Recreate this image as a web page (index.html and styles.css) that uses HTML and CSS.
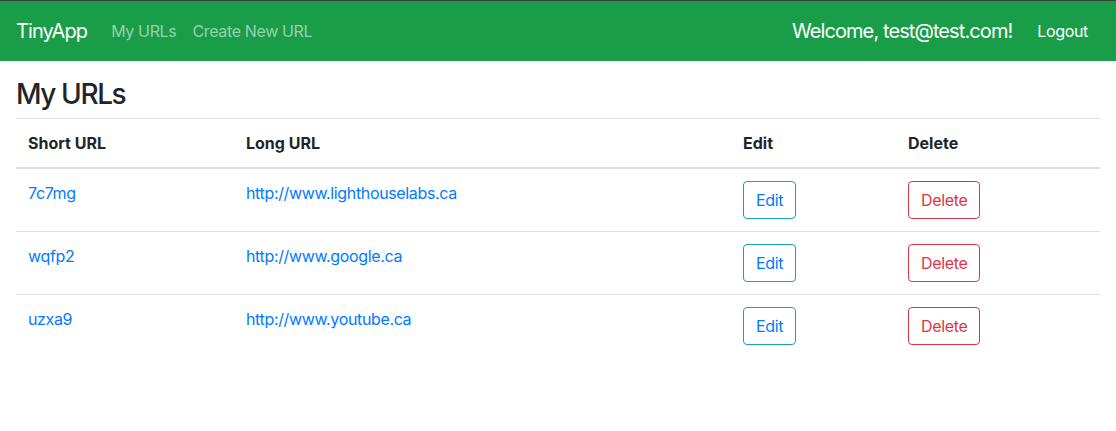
FILE: index.html
```html
<!DOCTYPE html>
<html lang="en">
<head>
<meta charset="utf-8">
<title>TinyApp</title>
<link rel="stylesheet" href="styles.css">
</head>
<body>
<nav class="navbar">
  <div class="nav-left">
    <a class="brand" href="#">TinyApp</a>
    <a class="nav-link" href="#">My URLs</a>
    <a class="nav-link" href="#">Create New URL</a>
  </div>
  <div class="nav-right">
    <span class="welcome">Welcome, test@test.com!</span>
    <a class="logout" href="#">Logout</a>
  </div>
</nav>
<main class="container">
  <h3 class="title">My URLs</h3>
  <table class="table">
    <colgroup>
      <col class="c1"><col class="c2"><col class="c3"><col class="c4">
    </colgroup>
    <thead>
      <tr><th>Short URL</th><th>Long URL</th><th>Edit</th><th>Delete</th></tr>
    </thead>
    <tbody>
      <tr>
        <td><a href="#">7c7mg</a></td>
        <td><a href="#">http://www.lighthouselabs.ca</a></td>
        <td><a class="btn btn-edit" href="#">Edit</a></td>
        <td><button class="btn btn-delete">Delete</button></td>
      </tr>
      <tr>
        <td><a href="#">wqfp2</a></td>
        <td><a href="#">http://www.google.ca</a></td>
        <td><a class="btn btn-edit" href="#">Edit</a></td>
        <td><button class="btn btn-delete">Delete</button></td>
      </tr>
      <tr>
        <td><a href="#">uzxa9</a></td>
        <td><a href="#">http://www.youtube.ca</a></td>
        <td><a class="btn btn-edit" href="#">Edit</a></td>
        <td><button class="btn btn-delete">Delete</button></td>
      </tr>
    </tbody>
  </table>
</main>
</body>
</html>
```
FILE: styles.css
```css
* { box-sizing: border-box; }
html, body {
  margin: 0;
  font-family: Inter, "Liberation Sans", Arial, sans-serif;
  font-size: 16px;
  line-height: 1.5;
  letter-spacing: -0.022em;
  color: #212529;
  background: #fff;
}
a { text-decoration: none; color: #007bff; }

.navbar {
  display: flex;
  align-items: center;
  justify-content: space-between;
  height: 61px;
  border-top: 1px solid #3d3d3d;
  background: #199d48;
  padding: 0 20px 0 16px;
}
.nav-left, .nav-right { display: flex; align-items: center; }
.brand {
  color: #fff;
  font-size: 20px;
  line-height: 30px;
  letter-spacing: -0.045em;
  margin-right: 16px;
}
.nav-link {
  color: rgba(255,255,255,0.55);
  padding: 8px;
  line-height: 24px;
}
.welcome {
  color: #fff;
  font-size: 20px;
  line-height: 30px;
  letter-spacing: -0.045em;
  margin-right: 17px;
}
.logout {
  color: #fff;
  padding: 8px;
  line-height: 24px;
}

.container { padding: 0 16px; }
.title {
  margin: 17px 0 6px;
  font-size: 28px;
  font-weight: 500;
  line-height: 1.2;
  letter-spacing: -0.05em;
}
.table {
  width: 100%;
  border-collapse: collapse;
  table-layout: fixed;
}
.c1 { width: 218px; }
.c2 { width: 497px; }
.c3 { width: 165px; }
.c4 { width: 204px; }
.table th, .table td {
  padding: 12px;
  border-top: 1px solid #dee2e6;
  text-align: left;
  vertical-align: top;
}
.table th { font-weight: 700; letter-spacing: 0; }
.table thead th { border-bottom: 2px solid #dee2e6; }
.btn {
  display: inline-block;
  font-family: inherit;
  font-size: 16px;
  letter-spacing: inherit;
  line-height: 24px;
  padding: 6px 12px;
  border-radius: 4px;
  border: 1px solid;
  background: transparent;
  cursor: pointer;
}
.btn-edit { border-color: #17a2b8; color: #007bff; }
.btn-delete { border-color: #dc3545; color: #dc3545; }
```
